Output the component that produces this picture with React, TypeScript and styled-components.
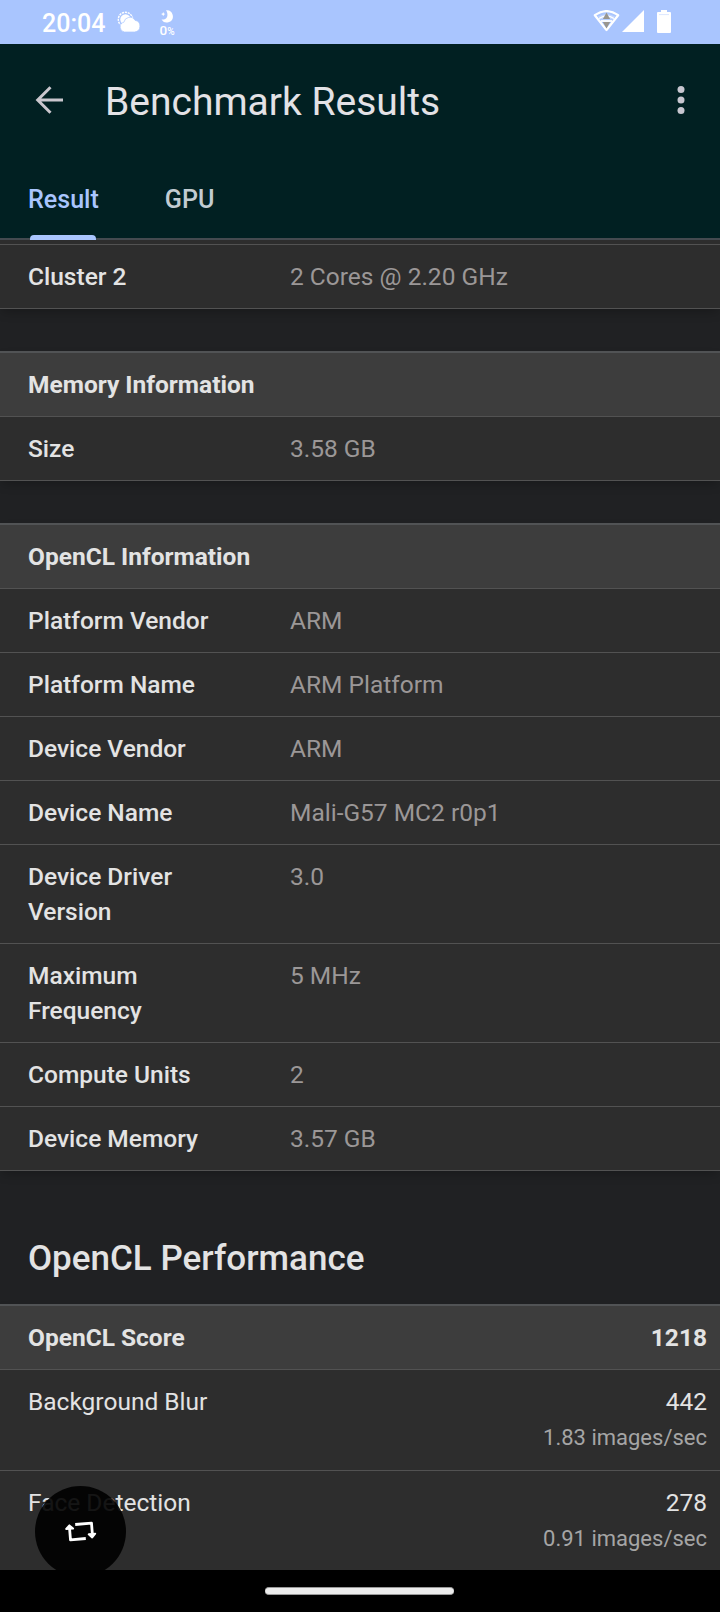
import React from 'react';
import styled, { createGlobalStyle } from 'styled-components';

const GlobalStyle = createGlobalStyle`
  * { box-sizing: border-box; }
  body { margin: 0; background: #000; }
`;

const Screen = styled.div`
  position: relative;
  display: flex;
  flex-direction: column;
  width: 720px;
  height: 1612px;
  overflow: hidden;
  background: #202123;
  color: #e3e3e3;
  font-family: Roboto, sans-serif;
`;

const StatusBar = styled.div`
  display: flex;
  align-items: flex-start;
  justify-content: space-between;
  flex: none;
  height: 44px;
  padding: 0 49px 0 42px;
  background: #a9c5fe;
  color: #fff;
`;

const StatusGroup = styled.div`
  display: flex;
  align-items: flex-start;
`;

const Clock = styled.span`
  width: 75px;
  padding-top: 9px;
  font-size: 25px;
  font-weight: 500;
  line-height: 29px;
  white-space: nowrap;
`;

const Humidity = styled.div`
  display: flex;
  flex-direction: column;
  align-items: center;
  width: 18px;
  margin-left: 17px;
  padding-top: 10px;
`;

const HumidityText = styled.span`
  font-size: 13.5px;
  font-weight: 500;
  line-height: 14px;
  white-space: nowrap;
  small { font-size: 10px; }
`;

const AppBar = styled.header`
  position: relative;
  flex: none;
  height: 196px;
  background: #012022;
  border-bottom: 2px solid #444a50;
`;

const TitleRow = styled.div`
  display: flex;
  align-items: center;
  height: 112px;
  padding: 0 35px 0 35px;
`;

const Title = styled.h1`
  flex: 1;
  margin: 3px 0 0 41px;
  font-size: 39px;
  font-weight: 400;
  line-height: 46px;
  color: #e3e2e6;
`;

const Tabs = styled.nav`
  display: flex;
  height: 84px;
  padding-left: 28px;
  gap: 66px;
`;

const Tab = styled.div<{ $active?: boolean }>`
  display: flex;
  flex-direction: column;
  justify-content: space-between;
  padding-top: 28px;
  font-size: 25.1px;
  font-weight: 500;
  line-height: 32px;
  color: ${(p) => (p.$active ? '#a9c5fe' : '#c2ccd2')};
`;

const TabIndicator = styled.span`
  width: 66px;
  height: 5px;
  margin-left: 2px;
  border-radius: 4px 4px 0 0;
  background: #a9c5fe;
`;

const Content = styled.main`
  flex: none;
  height: 1330px;
  overflow: hidden;
`;

const Table = styled.section`
  margin-bottom: 42px;
  border-top: 2px solid #515355;
  background: #2d2d2d;
  box-shadow: 0 5px 10px -2px rgba(0, 0, 0, 0.24);
`;

const ClippedTable = styled(Table)`
  padding-top: 4px;
  border-top: 0;
`;

const ClusterRow = styled.div`
  border-top: 1px solid #525252;
`;

const Row = styled.div`
  display: flex;
  justify-content: space-between;
  min-height: 64px;
  padding: 14px 13px 14px 28px;
  border-bottom: 1px solid #525252;
  font-size: 24.5px;
  line-height: 35px;
`;

const HeaderRow = styled(Row)`
  background: #3d3d3d;
  font-weight: 700;
`;

const Label = styled.div`
  flex: none;
  width: 200px;
  font-weight: 500;
`;

const Value = styled.div`
  flex: 1;
  margin-left: 62px;
  color: #9b9797;
`;

const Score = styled.div`
  text-align: right;
`;

const Rate = styled.div`
  height: 37px;
  padding-top: 1px;
  font-size: 22px;
  color: #a5a5a5;
`;

const Heading = styled.h2`
  margin: 67px 0 24px 28px;
  font-size: 35px;
  font-weight: 500;
  line-height: 42px;
`;

const NavBar = styled.footer`
  display: flex;
  justify-content: center;
  flex: none;
  height: 42px;
  padding: 17px 1px 0 0;
  background: #000;
`;

const Handle = styled.div`
  width: 189px;
  height: 8px;
  border: 1px solid #999;
  border-width: 1px 0;
  border-radius: 4px;
  background: #ececec;
`;

const FloatingClip = styled.div`
  position: absolute;
  left: 35px;
  top: 1486px;
  width: 91px;
  height: 84px;
  overflow: hidden;
`;

const FloatingButton = styled.div`
  display: flex;
  align-items: center;
  justify-content: center;
  width: 91px;
  height: 91px;
  border-radius: 50%;
  background: rgba(0, 0, 0, 0.91);
`;

const StatusIcon = styled.svg`
  flex: none;
  margin-top: 10px;
`;

const WeatherIcon = () => (
  <StatusIcon width="24" height="24" viewBox="-0.5 -1 24 24">
    <circle cx="8" cy="8.5" r="7.2" fill="none" stroke="#fff" strokeWidth="1.4" strokeDasharray="2.2 .8" />
    <circle cx="8" cy="8.5" r="5.2" fill="#fff" />
    <path d="M7 21a5 5 0 0 1-.6-9.8A6 6 0 0 1 17.5 9.3 5.9 5.9 0 0 1 17 21Z" fill="#fff" stroke="#a9c5fe" strokeWidth=".7" />
  </StatusIcon>
);

const MoonIcon = () => (
  <svg width="14" height="13" viewBox="0 0 14 13">
    <path d="M6 .3A6.1 6.1 0 1 1 1.5 9.5C7.2 10.5 9 4.5 6 .3Z" fill="#fff" />
    <path d="m3.2 2 .7 1.500 1.500.6-1.500.7-.7 1.500-.7-1.500L1 4.100l1.500-.6Z" fill="#fff" />
  </svg>
);

const SignalIcons = () => (
  <StatusIcon width="78" height="24" viewBox="0 0 78 24">
    <path d="M1.800 5.200Q13.500-3 25.200 5.200L13.500 20Z" fill="none" stroke="#fff" strokeWidth="2.200" strokeLinejoin="round" />
    <path d="M5 6.500Q13.500 1.500 22 6.500L19.500 9.500H7.500Z" fill="#fff" opacity=".3" />
    <path d="M6 8.500Q13.500 3.500 21 8.500" fill="none" stroke="#fff" strokeWidth="1.500" />
    <path d="M8 11h11" stroke="#fff" strokeWidth="1.800" />
    <path d="m13.500 2.500 3.600 6.500h-7.200ZM9.900 12h7.200l-3.600 6.500Z" fill="#99968f" />
    <path d="M51 0v22H29Z" fill="#fff" />
    <path d="M68 0h6v2h3q1 0 1 1v19q0 1-1 1H65q-1 0-1-1V3q0-1 1-1h3Z" fill="#fff" />
    <path d="M66 4.600h10" stroke="#d2dfff" strokeWidth=".8" />
  </StatusIcon>
);

const BackIcon = () => (
  <svg width="29" height="28" viewBox="0 0 29 28" fill="none" stroke="#cac7ce" strokeWidth="3">
    <path d="M28 14H3M15.500 1.200 2.700 14l12.800 12.800" />
  </svg>
);

const MoreIcon = () => (
  <svg width="8" height="30" viewBox="0 0 8 30" fill="#c7c6d0">
    <circle cx="4" cy="4.500" r="3.500" />
    <circle cx="4" cy="15" r="3.500" />
    <circle cx="4" cy="25.500" r="3.500" />
  </svg>
);

const RotateIcon = () => (
  <svg width="32" height="22" viewBox="0 0 32 22" fill="none" stroke="#fff" strokeWidth="2.800" strokeLinejoin="round">
    <path d="M10.200 3.500 26.500 2.200l.8 10M20.800 17.500l-15.300 1.300L4.600 8" />
    <path d="m1.200 8 3.200-3.600L8.100 7.500ZM23.700 13.300l6.500-.6-3 3.700Z" fill="#fff" strokeWidth="2" />
  </svg>
);

const openClInfo: [string, string][] = [
  ['Platform Vendor', 'ARM'],
  ['Platform Name', 'ARM Platform'],
  ['Device Vendor', 'ARM'],
  ['Device Name', 'Mali-G57 MC2 r0p1'],
  ['Device Driver Version', '3.0'],
  ['Maximum Frequency', '5 MHz'],
  ['Compute Units', '2'],
  ['Device Memory', '3.57 GB'],
];

const scores: [string, string, string][] = [
  ['Background Blur', '442', '1.83 images/sec'],
  ['Face Detection', '278', '0.91 images/sec'],
];

const InfoRow = ({ label, value }: { label: string; value: string }) => (
  <Row>
    <Label>{label}</Label>
    <Value>{value}</Value>
  </Row>
);

export default function App() {
  return (
    <Screen>
      <GlobalStyle />
      <StatusBar>
        <StatusGroup>
          <Clock>20:04</Clock>
          <WeatherIcon />
          <Humidity>
            <MoonIcon />
            <HumidityText>0<small>%</small></HumidityText>
          </Humidity>
        </StatusGroup>
        <SignalIcons />
      </StatusBar>
      <AppBar>
        <TitleRow>
          <BackIcon />
          <Title>Benchmark Results</Title>
          <MoreIcon />
        </TitleRow>
        <Tabs>
          <Tab $active>
            Result
            <TabIndicator />
          </Tab>
          <Tab>GPU</Tab>
        </Tabs>
      </AppBar>
      <Content>
        <ClippedTable>
          <ClusterRow>
            <InfoRow label="Cluster 2" value="2 Cores @ 2.20 GHz" />
          </ClusterRow>
        </ClippedTable>
        <Table>
          <HeaderRow>Memory Information</HeaderRow>
          <InfoRow label="Size" value="3.58 GB" />
        </Table>
        <Table>
          <HeaderRow>OpenCL Information</HeaderRow>
          {openClInfo.map(([label, value]) => (
            <InfoRow key={label} label={label} value={value} />
          ))}
        </Table>
        <Heading>OpenCL Performance</Heading>
        <Table>
          <HeaderRow>
            <span>OpenCL Score</span>
            <span>1218</span>
          </HeaderRow>
          {scores.map(([name, score, rate]) => (
            <Row key={name}>
              <span>{name}</span>
              <Score>
                {score}
                <Rate>{rate}</Rate>
              </Score>
            </Row>
          ))}
        </Table>
      </Content>
      <NavBar>
        <Handle />
      </NavBar>
      <FloatingClip>
        <FloatingButton>
          <RotateIcon />
        </FloatingButton>
      </FloatingClip>
    </Screen>
  );
}
